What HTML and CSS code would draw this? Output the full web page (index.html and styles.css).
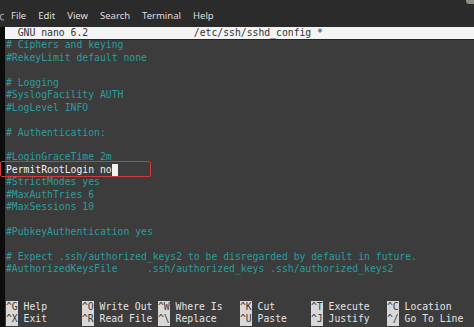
FILE: index.html
```html
<!DOCTYPE html>
<html>
<head>
<meta charset="utf-8">
<link rel="stylesheet" href="styles.css">
</head>
<body>
<div class="window">
  <div class="menubar">
    <svg class="edge-mark" width="4" height="8" viewBox="0 0 4 8"><path d="M4 1.5 C1 0.5 0 3 0.5 5 C1 7 3 7.5 4 6.5" fill="none" stroke="#9a9a9a" stroke-width="1.2"/></svg>
    <span class="menu">File</span>
    <span class="menu">Edit</span>
    <span class="menu">View</span>
    <span class="menu">Search</span>
    <span class="menu">Terminal</span>
    <span class="menu">Help</span>
    <span class="corner"></span>
  </div>
  <div class="body">
    <div class="strip"></div>
    <div class="term">
      <div class="line title">  GNU nano 6.2                  /etc/ssh/sshd_config *</div>
      <div class="line c"># Ciphers and keying</div>
      <div class="line c">#RekeyLimit default none</div>
      <div class="line"> </div>
      <div class="line c"># Logging</div>
      <div class="line c">#SyslogFacility AUTH</div>
      <div class="line c">#LogLevel INFO</div>
      <div class="line"> </div>
      <div class="line c"># Authentication:</div>
      <div class="line"> </div>
      <div class="line c">#LoginGraceTime 2m</div>
      <div class="line w">PermitRootLogin no<span class="cursor"> </span><span class="redbox"></span></div>
      <div class="line c">#StrictModes yes</div>
      <div class="line c">#MaxAuthTries 6</div>
      <div class="line c">#MaxSessions 10</div>
      <div class="line"> </div>
      <div class="line c">#PubkeyAuthentication yes</div>
      <div class="line"> </div>
      <div class="line c"># Expect .ssh/authorized_keys2 to be disregarded by default in future.</div>
      <div class="line c">#AuthorizedKeysFile     .ssh/authorized_keys .ssh/authorized_keys2</div>
      <div class="line"> </div>
      <div class="line"> </div>
      <div class="keys">
        <div class="k"><span class="key">^G</span> Help</div>
        <div class="k"><span class="key">^O</span> Write Out</div>
        <div class="k"><span class="key">^W</span> Where Is</div>
        <div class="k"><span class="key">^K</span> Cut</div>
        <div class="k"><span class="key">^T</span> Execute</div>
        <div class="k"><span class="key">^C</span> Location</div>
        <div class="k"><span class="key">^X</span> Exit</div>
        <div class="k"><span class="key">^R</span> Read File</div>
        <div class="k"><span class="key">^\</span> Replace</div>
        <div class="k"><span class="key">^U</span> Paste</div>
        <div class="k"><span class="key">^J</span> Justify</div>
        <div class="k"><span class="key">^/</span> Go To Line</div>
      </div>
    </div>
  </div>
</div>
</body>
</html>
```
FILE: styles.css
```css
html, body {
  margin: 0;
  padding: 0;
  background: #3c3c3c;
  overflow: hidden;
}
.window {
  width: 474px;
  height: 327px;
  display: flex;
  flex-direction: column;
}
.menubar {
  height: 27px;
  flex: none;
  background: #2b2b2b;
  display: flex;
  align-items: center;
  position: relative;
  font-family: "Noto Sans", "DejaVu Sans", sans-serif;
  font-size: 9.5px;
  color: #dedede;
  padding-left: 11px;
  gap: 12px;
  padding-top: 4px;
  box-sizing: border-box;
}
.edge-mark {
  position: absolute;
  left: 0;
  top: 13px;
}
.corner {
  position: absolute;
  right: 0;
  top: 0;
  width: 8px;
  height: 4px;
  background: #8a8f85;
  border-bottom-left-radius: 3px;
}
.body {
  flex: 1;
  display: flex;
}
.strip {
  width: 5px;
  background: #0c0c0c;
  flex: none;
}
.term {
  flex: 1;
  font-family: "DejaVu Sans Mono", monospace;
  font-size: 9.75px;
  color: #ececec;
}
.line {
  height: 12.45px;
  line-height: 12.45px;
  white-space: pre;
  padding-left: 1px;
  position: relative;
}
.title {
  background: #f4f4f4;
  color: #333;
  border-bottom: 1px solid #262626;
  box-sizing: content-box;
  margin-bottom: -1px;
}
.c { color: #2a9d9e; }
.w { color: #efefef; }
.cursor {
  display: inline-block;
  width: 5.87px;
  height: 12px;
  vertical-align: top;
  background: #f2f2f2;
}
.redbox {
  position: absolute;
  left: -5px;
  top: -3px;
  width: 151px;
  height: 16px;
  box-sizing: border-box;
  border: 1.5px solid #cf3b3d;
  border-radius: 2px;
}
.keys {
  display: grid;
  grid-template-columns: 76px 76px 82px 71px 76px auto;
  padding-left: 1px;
}
.k {
  height: 12.45px;
  line-height: 12.45px;
  white-space: pre;
  color: #e4e4e4;
}
.key {
  background: #d8d8d8;
  color: #3a3a3a;
  display: inline-block;
  height: 12.45px;
}
```
